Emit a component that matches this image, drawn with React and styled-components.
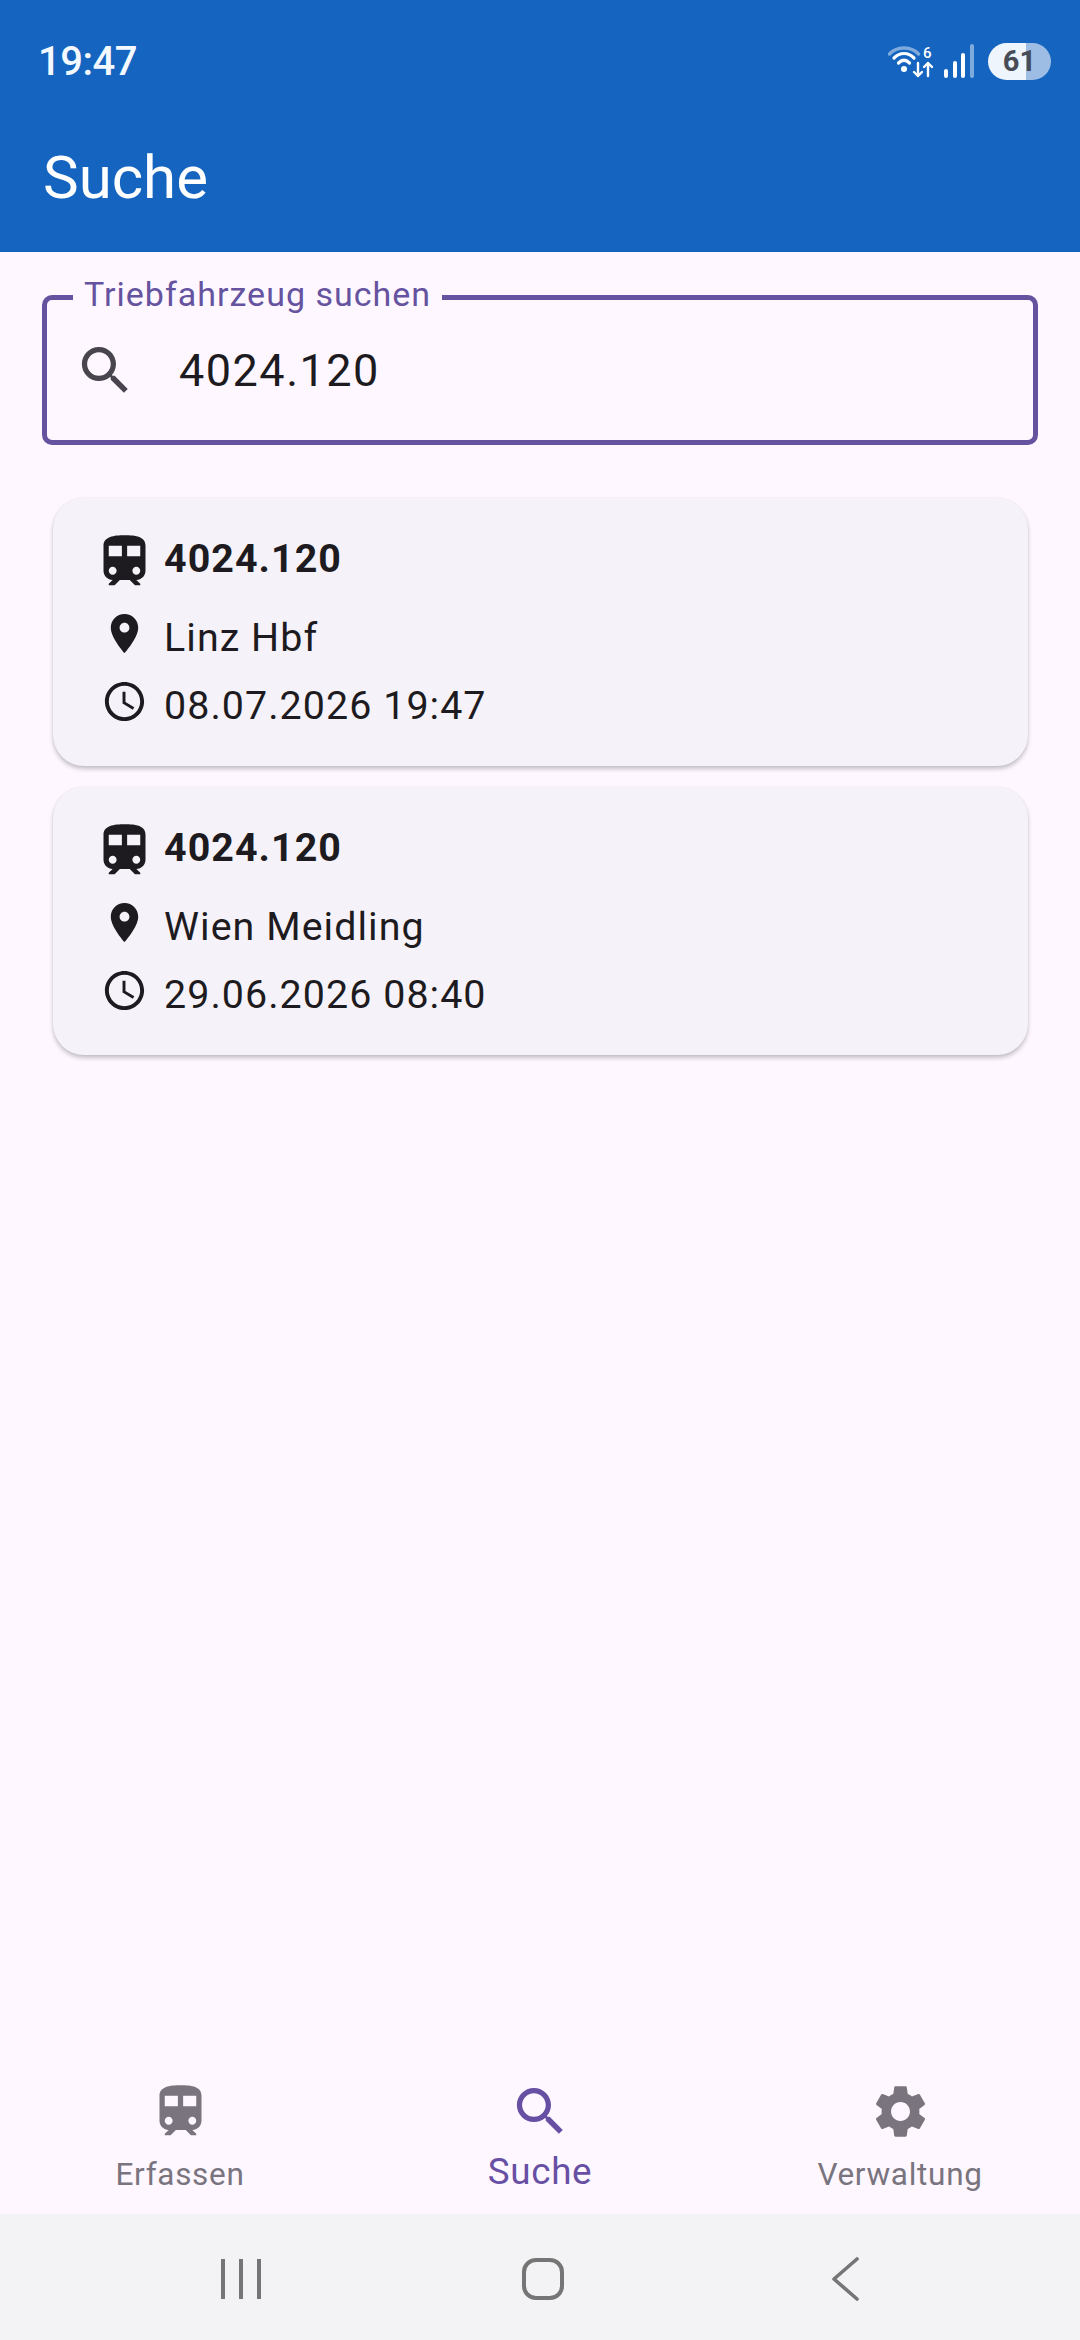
import styled, { createGlobalStyle } from "styled-components";

const GlobalStyle = createGlobalStyle`
    html, body {
        margin: 0;
        padding: 0;
        background: #fef7ff;
    }
    body {
        font-family: Roboto, "Noto Sans", sans-serif;
        -webkit-font-smoothing: antialiased;
    }
`;

const PATHS = {
    train: "M12 2c-4 0-8 .5-8 4v9.5C4 17.43 5.57 19 7.5 19L6 20.5v.5h2.23l2-2H14l2 2h2v-.5L16.5 19c1.93 0 3.5-1.57 3.5-3.5V6c0-3.5-3.58-4-8-4zM7.5 17c-.83 0-1.5-.67-1.5-1.5S6.67 14 7.5 14s1.5.67 1.5 1.5S8.33 17 7.5 17zm3.5-7H6V6h5v4zm2 0V6h5v4h-5zm3.5 7c-.83 0-1.5-.67-1.5-1.5s.67-1.5 1.5-1.5 1.5.67 1.5 1.5-.67 1.5-1.5 1.5z",
    search: "M15.5 14h-.79l-.28-.27C15.41 12.59 16 11.11 16 9.5 16 5.91 13.09 3 9.5 3S3 5.91 3 9.5 5.91 16 9.5 16c1.61 0 3.09-.59 4.23-1.57l.27.28v.79l5 4.99L20.49 19l-4.99-5zm-6 0C7.01 14 5 11.99 5 9.5S7.01 5 9.5 5 14 7.01 14 9.5 11.99 14 9.5 14z",
    place: "M12 2C8.13 2 5 5.13 5 9c0 5.25 7 13 7 13s7-7.75 7-13c0-3.87-3.13-7-7-7zm0 9.5c-1.38 0-2.5-1.12-2.5-2.5s1.12-2.5 2.5-2.5 2.5 1.12 2.5 2.5-1.12 2.5-2.5 2.5z",
    clock: "M11.99 2C6.47 2 2 6.48 2 12s4.47 10 9.99 10C17.52 22 22 17.52 22 12S17.52 2 11.99 2zM12 20c-4.42 0-8-3.58-8-8s3.58-8 8-8 8 3.58 8 8-3.58 8-8 8zm.5-13H11v6l5.25 3.15.75-1.23-4.5-2.67z",
    settings: "M19.14 12.94c.04-.3.06-.61.06-.94 0-.32-.02-.64-.07-.94l2.03-1.58c.18-.14.23-.41.12-.61l-1.92-3.32c-.12-.22-.37-.29-.59-.22l-2.39.96c-.5-.38-1.03-.7-1.62-.94l-.36-2.54c-.04-.24-.24-.41-.48-.41h-3.84c-.24 0-.43.17-.47.41l-.36 2.54c-.59.24-1.13.57-1.62.94l-2.39-.96c-.22-.08-.47 0-.59.22L2.74 8.87c-.12.21-.08.47.12.61l2.03 1.58c-.05.3-.09.63-.09.94s.02.64.07.94l-2.03 1.58c-.18.14-.23.41-.12.61l1.92 3.32c.12.22.37.29.59.22l2.39-.96c.5.38 1.03.7 1.62.94l.36 2.54c.05.24.24.41.48.41h3.84c.24 0 .44-.17.47-.41l.36-2.54c.59-.24 1.13-.56 1.62-.94l2.39.96c.22.08.47 0 .59-.22l1.92-3.32c.12-.22.07-.47-.12-.61l-2.01-1.58zM12 15.6c-1.98 0-3.6-1.62-3.6-3.6s1.62-3.6 3.6-3.6 3.6 1.62 3.6 3.6-1.62 3.6-3.6 3.6z",
};

const Icon = ({ name, size, color }) => (
    <svg width={size} height={size} viewBox="0 0 24 24" fill={color} style={{ display: "block", flexShrink: 0 }}>
        <path d={PATHS[name]} />
    </svg>
);

const WifiIcon = () => (
    <svg width="46" height="34" viewBox="0 0 46 34" fill="none">
        <path d="M1.500 10 C9 2 23 2 30.500 10" stroke="#ffffff" strokeOpacity="0.45" strokeWidth="3.4" strokeLinecap="round" />
        <path d="M6 14 C12 8 20 8 26 14" stroke="#ffffff" strokeWidth="3.2" strokeLinecap="round" />
        <path d="M10.500 19 C14 15.500 18 15.500 21.500 19" stroke="#ffffff" strokeWidth="3.2" strokeLinecap="round" />
        <circle cx="16" cy="25" r="3" fill="#ffffff" />
        <path d="M30 19 V32 M26 28 L30 32 L34 28" stroke="#ffffff" strokeWidth="2.4" strokeLinecap="round" strokeLinejoin="round" />
        <path d="M40 32 V19 M36 23 L40 19 L44 23" stroke="#ffffff" strokeWidth="2.4" strokeLinecap="round" strokeLinejoin="round" />
        <text x="35" y="14" fill="#ffffff" fontFamily="Roboto, sans-serif" fontSize="15" fontWeight="500">6</text>
    </svg>
);

const SignalIcon = () => (
    <svg width="30" height="34" viewBox="0 0 30 34">
        <rect x="0" y="25" width="4" height="9" rx="2" fill="#ffffff" />
        <rect x="9" y="17" width="4" height="17" rx="2" fill="#ffffff" />
        <rect x="17" y="9" width="4" height="25" rx="2" fill="#ffffff" />
        <rect x="26" y="0" width="4" height="34" rx="2" fill="#ffffff" fillOpacity="0.45" />
    </svg>
);

const NAV_ITEMS = [
    { label: "Erfassen", icon: "train" },
    { label: "Suche", icon: "search", active: true },
    { label: "Verwaltung", icon: "settings" },
];

const RESULTS = [
    { id: "4024.120", place: "Linz Hbf", time: "08.07.2026 19:47" },
    { id: "4024.120", place: "Wien Meidling", time: "29.06.2026 08:40" },
];

const App = () => {
    return (
        <Page>
            <GlobalStyle />
            <Header>
                <StatusBar>
                    <Clock>19:47</Clock>
                    <StatusRight>
                        <WifiIcon />
                        <SignalIcon />
                        <Battery>
                            <BatteryText>61</BatteryText>
                        </Battery>
                    </StatusRight>
                </StatusBar>
                <Title>Suche</Title>
            </Header>

            <Content>
                <SearchField>
                    <FieldLabel>Triebfahrzeug suchen</FieldLabel>
                    <Icon name="search" size={63} color="#49454f" />
                    <FieldValue>4024.120</FieldValue>
                </SearchField>

                <CardList>
                    {RESULTS.map((r) => (
                        <Card key={r.place}>
                            <Row $height={63}>
                                <IconSlot $drop={6}>
                                    <Icon name="train" size={63} color="#1d1b20" />
                                </IconSlot>
                                <CardTitle>{r.id}</CardTitle>
                            </Row>
                            <Row $height={54} $top={20}>
                                <IconSlot $lift={8}>
                                    <Icon name="place" size={47} color="#1d1b20" />
                                </IconSlot>
                                <CardText>{r.place}</CardText>
                            </Row>
                            <Row $height={54} $top={14}>
                                <IconSlot $lift={7}>
                                    <Icon name="clock" size={47} color="#1d1b20" />
                                </IconSlot>
                                <CardText>{r.time}</CardText>
                            </Row>
                        </Card>
                    ))}
                </CardList>
            </Content>

            <BottomNav>
                {NAV_ITEMS.map((item) => (
                    <NavItem key={item.label}>
                        <Icon name={item.icon} size={63} color={item.active ? "#6750a4" : "#79747e"} />
                        <NavLabel $active={item.active}>{item.label}</NavLabel>
                    </NavItem>
                ))}
            </BottomNav>

            <SystemBar>
                <Recents>
                    <span />
                    <span />
                    <span />
                </Recents>
                <HomeButton />
                <svg width="28" height="44" viewBox="0 0 28 44" fill="none">
                    <path d="M26 2 L3 22 L26 42" stroke="#757575" strokeWidth="3.6" strokeLinecap="round" strokeLinejoin="round" />
                </svg>
            </SystemBar>
        </Page>
    );
};

export default App;

const Page = styled.div`
    width: 1080px;
    height: 2340px;
    display: flex;
    flex-direction: column;
    background: #fef7ff;
    overflow: hidden;
`;

const Header = styled.header`
    height: 252px;
    flex-shrink: 0;
    box-sizing: border-box;
    background: #1565c0;
    color: #ffffff;
    padding: 37px 29px 0 38px;
`;

const StatusBar = styled.div`
    display: flex;
    align-items: center;
    justify-content: space-between;
    height: 48px;
`;

const Clock = styled.span`
    font-size: 40px;
    font-weight: 500;
    letter-spacing: -0.5px;
    color: #f4f8ff;
`;

const StatusRight = styled.div`
    display: flex;
    align-items: center;
    gap: 10px;
`;

const Battery = styled.div`
    width: 63px;
    height: 37px;
    margin-left: 4px;
    border-radius: 19px;
    display: flex;
    align-items: center;
    justify-content: center;
    background: linear-gradient(to right, #eef5fd 0 38px, #9dbde4 38px);
`;

const BatteryText = styled.span`
    font-size: 29px;
    font-weight: 700;
    color: #474c57;
`;

const Title = styled.h1`
    margin: 59px 0 0 5px;
    font-size: 60px;
    font-weight: 400;
    line-height: 68px;
    color: #ffffff;
`;

const Content = styled.main`
    flex: 1;
    padding: 43px 42px 0;
`;

const SearchField = styled.div`
    position: relative;
    height: 150px;
    box-sizing: border-box;
    display: flex;
    align-items: center;
    gap: 42px;
    padding: 0 0 0 27px;
    border: 5px solid #65539f;
    border-radius: 10px;
`;

const FieldLabel = styled.span`
    position: absolute;
    left: 26px;
    top: -27px;
    padding: 0 11px;
    background: #fef7ff;
    font-size: 34px;
    line-height: 42px;
    letter-spacing: 1px;
    color: #65539f;
`;

const FieldValue = styled.span`
    font-size: 45px;
    letter-spacing: 1.5px;
    color: #1d1b20;
`;

const CardList = styled.div`
    display: flex;
    flex-direction: column;
    gap: 21px;
    margin: 53px 10px 0 11px;
`;

const Card = styled.article`
    height: 268px;
    box-sizing: border-box;
    padding: 29px 40px 0;
    background: #f6f2f9;
    border-radius: 31px;
    box-shadow: 0 3px 4px rgba(0, 0, 0, 0.22), 0 0 2px rgba(0, 0, 0, 0.07);
`;

const Row = styled.div`
    display: flex;
    align-items: center;
    height: ${(props) => props.$height}px;
    margin-top: ${(props) => props.$top || 0}px;
`;

const IconSlot = styled.div`
    width: 63px;
    margin-right: 8px;
    display: flex;
    justify-content: center;
    padding-bottom: ${(props) => props.$lift || 0}px;
    padding-top: ${(props) => props.$drop || 0}px;
`;

const CardTitle = styled.span`
    font-size: 39.4px;
    font-weight: 700;
    letter-spacing: 1.05px;
    color: #1d1b20;
`;

const CardText = styled.span`
    font-size: 39.4px;
    letter-spacing: 1.05px;
    color: #1d1b20;
`;

const BottomNav = styled.nav`
    height: 150px;
    flex-shrink: 0;
    display: grid;
    grid-template-columns: repeat(3, 1fr);
    background: #fef7ff;
`;

const NavItem = styled.div`
    display: flex;
    flex-direction: column;
    align-items: center;
    padding-top: 16px;
`;

const NavLabel = styled.span`
    margin-top: ${(props) => (props.$active ? 8 : 11)}px;
    font-size: ${(props) => (props.$active ? 36.75 : 31.5)}px;
    line-height: 42px;
    letter-spacing: 0.7px;
    color: ${(props) => (props.$active ? "#6750a4" : "#79747e")};
`;

const SystemBar = styled.div`
    height: 126px;
    flex-shrink: 0;
    display: grid;
    grid-template-columns: repeat(3, 1fr);
    justify-items: center;
    align-items: center;
    padding: 4px 84px 0 90px;
    box-sizing: border-box;
    background: #f3f3f5;
`;

const Recents = styled.div`
    display: flex;
    gap: 14px;

    span {
        width: 4px;
        height: 40px;
        background: #757575;
    }
`;

const HomeButton = styled.div`
    width: 42px;
    height: 42px;
    box-sizing: border-box;
    border: 4px solid #757575;
    border-radius: 14px;
`;
